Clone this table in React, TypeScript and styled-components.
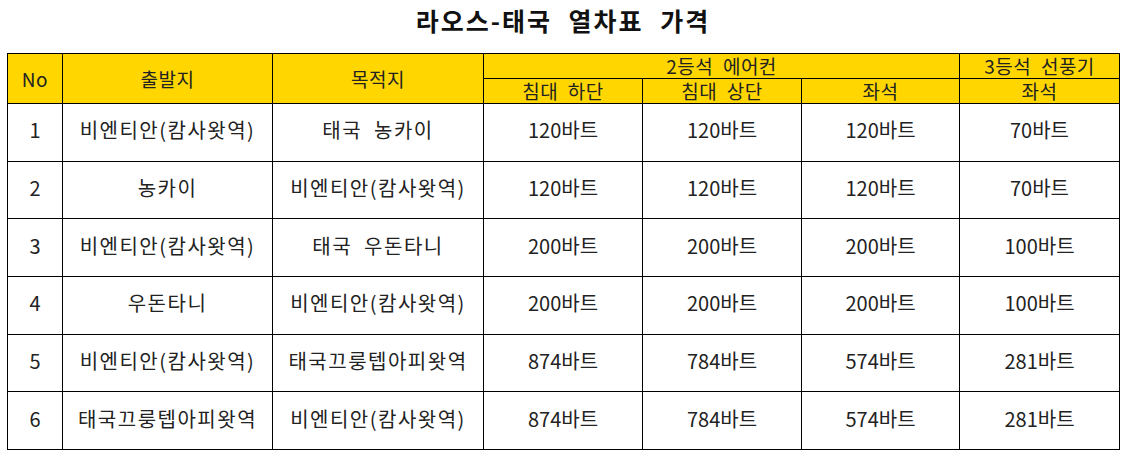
import React from 'react'
import styled, { createGlobalStyle } from 'styled-components'

type Route = {
  no: number
  from: string
  to: string
  lower: string
  upper: string
  seat2: string
  seat3: string
}

const routes: Array<Route> = [
  { no: 1, from: '비엔티안(캄사왓역)', to: '태국 농카이', lower: '120바트', upper: '120바트', seat2: '120바트', seat3: '70바트' },
  { no: 2, from: '농카이', to: '비엔티안(캄사왓역)', lower: '120바트', upper: '120바트', seat2: '120바트', seat3: '70바트' },
  { no: 3, from: '비엔티안(캄사왓역)', to: '태국 우돈타니', lower: '200바트', upper: '200바트', seat2: '200바트', seat3: '100바트' },
  { no: 4, from: '우돈타니', to: '비엔티안(캄사왓역)', lower: '200바트', upper: '200바트', seat2: '200바트', seat3: '100바트' },
  { no: 5, from: '비엔티안(캄사왓역)', to: '태국끄룽텝아피왓역', lower: '874바트', upper: '784바트', seat2: '574바트', seat3: '281바트' },
  { no: 6, from: '태국끄룽텝아피왓역', to: '비엔티안(캄사왓역)', lower: '874바트', upper: '784바트', seat2: '574바트', seat3: '281바트' },
]

const colWidths = [55, 210, 211, 159, 159, 158, 160]

const App: React.FC = () => {
  return (
    <Page>
      <GlobalStyle />
      <Title>라오스-태국 열차표 가격</Title>
      <Table>
        <colgroup>
          {colWidths.map((w, i) => (
            <col key={i} style={{ width: w }} />
          ))}
        </colgroup>
        <thead>
          <HeadRow>
            <HeadCell rowSpan={2}>No</HeadCell>
            <HeadCell rowSpan={2}>출발지</HeadCell>
            <HeadCell rowSpan={2}>목적지</HeadCell>
            <HeadCell colSpan={3}>2등석 에어컨</HeadCell>
            <HeadCell>3등석 선풍기</HeadCell>
          </HeadRow>
          <HeadRow>
            <HeadCell>침대 하단</HeadCell>
            <HeadCell>침대 상단</HeadCell>
            <HeadCell>좌석</HeadCell>
            <HeadCell>좌석</HeadCell>
          </HeadRow>
        </thead>
        <tbody>
          {routes.map((r) => (
            <BodyRow key={r.no}>
              <Cell>{r.no}</Cell>
              <Cell $spaced>{r.from}</Cell>
              <Cell $spaced>{r.to}</Cell>
              <Cell>{r.lower}</Cell>
              <Cell>{r.upper}</Cell>
              <Cell>{r.seat2}</Cell>
              <Cell>{r.seat3}</Cell>
            </BodyRow>
          ))}
        </tbody>
      </Table>
    </Page>
  )
}

const GlobalStyle = createGlobalStyle`
  body {
    margin: 0;
    background: #ffffff;
    font-family: "Noto Sans CJK KR", "Noto Sans", sans-serif;
    color: #1c1c1c;
  }
`

const Page = styled.div`
  width: 1129px;
  padding: 0 0 0 7px;
  box-sizing: border-box;
`

const Title = styled.h1`
  margin: 0;
  width: 1112px;
  height: 53px;
  padding-top: 4px;
  box-sizing: border-box;
  text-align: center;
  font-size: 25px;
  font-weight: 700;
  line-height: 32px;
  letter-spacing: 2px;
  word-spacing: 9px;
  color: #111;
`

const Table = styled.table`
  width: 1113px;
  border-collapse: collapse;
  table-layout: fixed;
`

const HeadRow = styled.tr`
  height: 25px;
`

const HeadCell = styled.th`
  background: #ffd600;
  border: 1px solid #000;
  padding: 0;
  font-size: 19px;
  font-weight: 400;
  line-height: 22px;
  text-align: center;
  color: #222;
  letter-spacing: 0.5px;
  word-spacing: 5px;
`

const BodyRow = styled.tr`
  height: 57.7px;
`

const Cell = styled.td<{ $spaced?: boolean }>`
  border: 1px solid #000;
  padding: 0 0 4px;
  font-size: 20px;
  line-height: 24px;
  text-align: center;
  color: #222;
  letter-spacing: ${(p) => (p.$spaced ? '1.5px' : '0')};
  word-spacing: ${(p) => (p.$spaced ? '6px' : '0')};
`

export default App
